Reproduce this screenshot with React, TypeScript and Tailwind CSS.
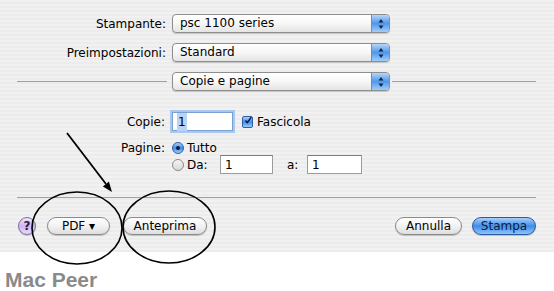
import React from "react";

const font = { fontFamily: '"DejaVu Sans", Verdana, sans-serif' };

function Arrows() {
  return (
    <svg width="8" height="12" viewBox="0 0 8 12">
      <path d="M4 1 L6.5 4.5 L1.5 4.5 Z" fill="#10244a" />
      <path d="M4 11 L6.5 7.5 L1.5 7.5 Z" fill="#10244a" />
    </svg>
  );
}

function Popup({ label }: { label: string }) {
  return (
    <div className="flex h-[19px] w-[218px] overflow-hidden rounded-[4px] border border-[#8e8e8e] bg-gradient-to-b from-white via-[#f7f7f7] to-[#e4e4e4] shadow-[0_1px_1px_rgba(0,0,0,0.18)]">
      <div className="flex-1 pl-[7px] text-[12px] leading-[17px] text-black">{label}</div>
      <div className="flex w-[18px] items-center justify-center rounded-r-[3px] border-l border-[#6a8cc0] bg-gradient-to-b from-[#b5d6f8] via-[#4f97e8] to-[#9fcdfb]">
        <Arrows />
      </div>
    </div>
  );
}

function Field({ w, focus }: { w: string; focus?: boolean }) {
  return (
    <div
      className={`${w} flex h-[19px] items-center border bg-white pl-[4px] text-[12px] ${
        focus
          ? "border-[#7a9fd4] shadow-[0_0_0_2px_#a9c8ee]"
          : "border-[#9c9c9c] border-t-[#7d7d7d]"
      }`}
    >
      <span className={focus ? "bg-[#b7d4f4] px-[1px]" : ""}>1</span>
    </div>
  );
}

function Pill({ children, w, blue }: { children: React.ReactNode; w: string; blue?: boolean }) {
  return (
    <div
      className={`${w} flex h-[18px] items-center justify-center rounded-full border text-[12px] leading-none shadow-[0_1px_1px_rgba(0,0,0,0.2)] ${
        blue
          ? "border-[#2c5aa0] bg-gradient-to-b from-[#a8d0fa] via-[#3f8de6] to-[#8cc4fb] text-[#0c1c3c]"
          : "border-[#8a8a8a] bg-gradient-to-b from-white via-[#f2f2f2] to-[#dedede] text-black"
      }`}
    >
      {children}
    </div>
  );
}

function Radio({ on }: { on?: boolean }) {
  return on ? (
    <div className="flex h-[12px] w-[12px] items-center justify-center rounded-full border border-[#2e5ea6] bg-gradient-to-b from-[#a9d1fa] via-[#3e8ce6] to-[#9bcdfb]">
      <div className="h-[4px] w-[4px] rounded-full bg-[#0d1a33]" />
    </div>
  ) : (
    <div className="h-[12px] w-[12px] rounded-full border border-[#8c8c8c] bg-gradient-to-b from-[#f4f4f4] to-[#d9d9d9]" />
  );
}

export default function App() {
  return (
    <div className="relative h-[291px] w-[554px] overflow-hidden bg-white" style={font}>
      <div className="flex h-[252px] flex-col bg-[repeating-linear-gradient(0deg,#ececec_0px,#ececec_2px,#f1f1f1_2px,#f1f1f1_4px)] pt-[14px] text-[12px] text-black">
        <div className="flex items-center">
          <div className="w-[166px] text-right">Stampante:</div>
          <div className="ml-[6px]">
            <Popup label="psc 1100 series" />
          </div>
        </div>
        <div className="mt-[10px] flex items-center">
          <div className="w-[166px] text-right">Preimpostazioni:</div>
          <div className="ml-[6px]">
            <Popup label="Standard" />
          </div>
        </div>
        <div className="mt-[10px] flex items-center pl-[17px]">
          <div className="h-px w-[150px] bg-[#a0a0a0]" />
          <div className="ml-[5px]">
            <Popup label="Copie e pagine" />
          </div>
          <div className="ml-[2px] h-px w-[144px] bg-[#a0a0a0]" />
        </div>

        <div className="mt-[21px] flex items-center">
          <div className="w-[165px] text-right">Copie:</div>
          <div className="ml-[7px]">
            <Field w="w-[61px]" focus />
          </div>
          <div className="ml-[9px] flex h-[12px] w-[11px] items-center justify-center rounded-[2px] border border-[#2e5ea6] bg-gradient-to-b from-[#a9d1fa] via-[#3e8ce6] to-[#9bcdfb]">
            <svg width="11" height="11" viewBox="0 0 11 11" className="-mt-[2px] ml-[1px]">
              <path d="M2 5.5 L4.5 8.5 L10 1" fill="none" stroke="#0d1a33" strokeWidth="2" />
            </svg>
          </div>
          <span className="ml-[4px]">Fascicola</span>
        </div>

        <div className="mt-[10px] flex h-[13px] items-center">
          <div className="w-[165px] text-right">Pagine:</div>
          <div className="ml-[7px]">
            <Radio on />
          </div>
          <span className="ml-[3px]">Tutto</span>
        </div>
        <div className="mt-[1px] flex h-[19px] items-center">
          <div className="ml-[172px]">
            <Radio />
          </div>
          <span className="ml-[3px] w-[33px]">Da:</span>
          <Field w="w-[53px]" />
          <span className="ml-[14px] w-[20px]">a:</span>
          <Field w="w-[55px]" />
        </div>

        <div className="ml-[17px] mt-[23px] h-px w-[519px] bg-[#a0a0a0]" />

        <div className="mt-[19px] flex items-center pl-[18px] pr-[18px]">
          <div className="flex h-[18px] w-[18px] items-center justify-center rounded-full border border-[#7f6aa8] bg-gradient-to-b from-[#efe6fb] via-[#cdb8ef] to-[#e6dafa] text-[12px] font-bold leading-none text-[#2a1e44] shadow-[0_1px_1px_rgba(0,0,0,0.2)]">
            ?
          </div>
          <div className="ml-[11px]">
            <Pill w="w-[63px]">PDF ▾</Pill>
          </div>
          <div className="ml-[13px]">
            <Pill w="w-[84px]">Anteprima</Pill>
          </div>
          <div className="flex-1" />
          <Pill w="w-[67px]">Annulla</Pill>
          <div className="ml-[10px]">
            <Pill w="w-[64px]" blue>
              Stampa
            </Pill>
          </div>
        </div>
      </div>

      <div
        className="mt-[17px] pl-[5px] text-[21px] font-bold leading-[22px] text-[#8a8a8a]"
        style={{ fontFamily: '"Liberation Sans", Arial, sans-serif' }}
      >
        Mac Peer
      </div>

      <svg className="pointer-events-none absolute left-0 top-0" width="554" height="291" viewBox="0 0 554 291">
        <ellipse cx="77" cy="228" rx="45" ry="36" fill="none" stroke="#000" strokeWidth="1.6" />
        <ellipse cx="169" cy="227" rx="46" ry="36" fill="none" stroke="#000" strokeWidth="1.6" />
        <line x1="67" y1="133" x2="106" y2="184" stroke="#000" strokeWidth="1.8" />
        <path d="M112 192 L108.9 181.6 L102.9 186.4 Z" fill="#000" />
      </svg>
    </div>
  );
}
